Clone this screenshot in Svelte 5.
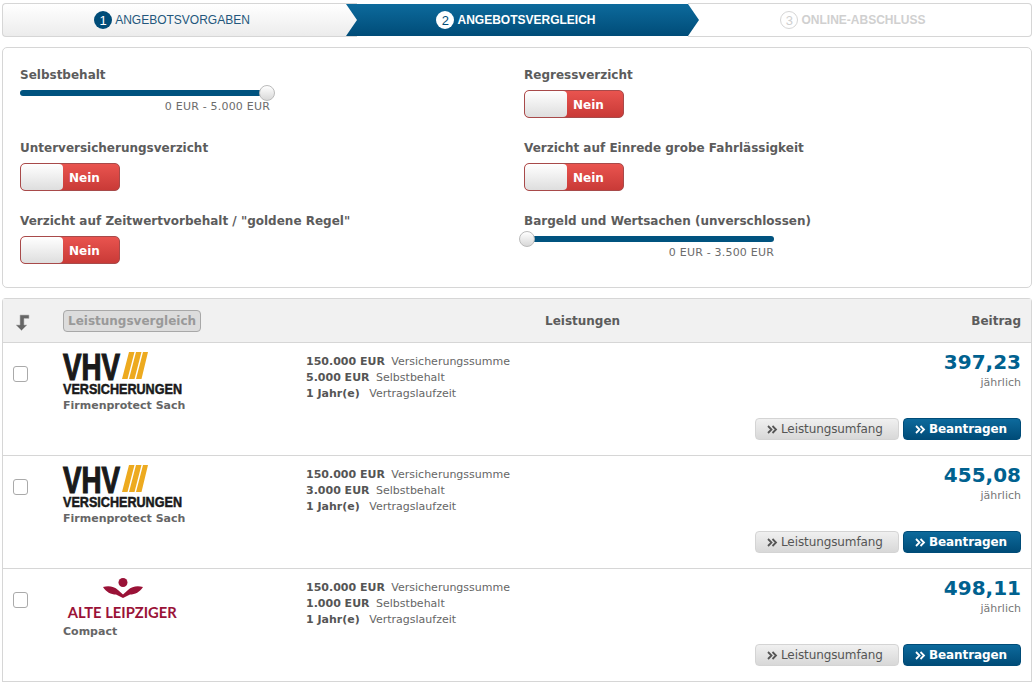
<script>
	const steps = [
		{ nr: 1, label: 'Angebotsvorgaben', state: 'done' },
		{ nr: 2, label: 'Angebotsvergleich', state: 'active' },
		{ nr: 3, label: 'Online-Abschluss', state: 'todo' }
	];

	const offers = [
		{ logo: 'vhv', tarif: 'Firmenprotect Sach', selbstbehalt: '5.000 EUR', preis: '397,23' },
		{ logo: 'vhv', tarif: 'Firmenprotect Sach', selbstbehalt: '3.000 EUR', preis: '455,08' },
		{ logo: 'alte', tarif: 'Compact', selbstbehalt: '1.000 EUR', preis: '498,11' }
	];
</script>

{#snippet toggle()}
	<div class="toggle">
		<span class="knob"></span>
		<span class="toggle-text">Nein</span>
	</div>
{/snippet}

{#snippet chevrons()}
	<svg class="chev" width="11" height="9" viewBox="0 0 11 9" fill="none" stroke="currentColor" stroke-width="1.8">
		<path d="M1 1l3.500 3.500L1 8M5.500 1L9 4.500 5.500 8" />
	</svg>
{/snippet}

<div class="page">
	<div class="stepper">
		{#each steps as step}
			<div class="step {step.state}">
				<span class="nr">{step.nr}</span>
				<span class="step-label">{step.label}</span>
			</div>
		{/each}
	</div>

	<section class="filters">
		<div class="filter">
			<div class="filter-label">Selbstbehalt</div>
			<div class="slider">
				<div class="track"></div>
				<span class="thumb at-end"></span>
			</div>
			<div class="range">0 EUR - 5.000 EUR</div>
		</div>
		<div class="filter">
			<div class="filter-label">Regressverzicht</div>
			{@render toggle()}
		</div>
		<div class="filter">
			<div class="filter-label">Unterversicherungsverzicht</div>
			{@render toggle()}
		</div>
		<div class="filter">
			<div class="filter-label">Verzicht auf Einrede grobe Fahrlässigkeit</div>
			{@render toggle()}
		</div>
		<div class="filter">
			<div class="filter-label">Verzicht auf Zeitwertvorbehalt / "goldene Regel"</div>
			{@render toggle()}
		</div>
		<div class="filter">
			<div class="filter-label">Bargeld und Wertsachen (unverschlossen)</div>
			<div class="slider">
				<div class="track"></div>
				<span class="thumb at-start"></span>
			</div>
			<div class="range">0 EUR - 3.500 EUR</div>
		</div>
	</section>

	<section class="table">
		<div class="table-head">
			<svg class="sort-arrow" width="15" height="17" viewBox="0 0 15 17">
				<path d="M14 1H5v10H1l5.500 5.500L12 11H9V4.500h5z" fill="#666" stroke="#bbb" stroke-width="0.6" />
			</svg>
			<span class="compare">Leistungsvergleich</span>
			<span class="head-mid">Leistungen</span>
			<span class="head-right">Beitrag</span>
		</div>

		{#each offers as offer}
			<div class="row">
				<span class="check"></span>
				<div class="insurer">
					{#if offer.logo === 'vhv'}
						<div class="logo vhv">
							<div class="vhv-top">
								<span class="vhv-name">VHV</span>
								<svg width="27" height="27" viewBox="0 0 27 27" fill="#edaa1f">
									<path d="M7 0h5.500L5.500 27H0zM14 0h5.500L12.500 27H7zM21 0h5L19.500 27H14z" />
								</svg>
							</div>
							<div class="vhv-sub">VERSICHERUNGEN</div>
						</div>
					{:else}
						<div class="logo alte">
							<svg class="alte-mark" width="40" height="20" viewBox="0 0 40 20" fill="#9a1237">
								<circle cx="20" cy="4.500" r="4.500" />
								<path d="M0 9c6-1.500 11-.5 15 3l5 4.500 5-4.500c4-3.500 9-4.500 15-3-3 5-8 7.500-13 7.500l-7 3.500-7-3.500C8 16.500 3 14 0 9z" />
							</svg>
							<div class="alte-name">ALTE LEIPZIGER</div>
						</div>
					{/if}
					<div class="tarif">{offer.tarif}</div>
				</div>
				<div class="facts">
					<div><b>150.000 EUR</b> Versicherungssumme</div>
					<div><b>{offer.selbstbehalt}</b> Selbstbehalt</div>
					<div class="years"><b>1 Jahr(e)</b> Vertragslaufzeit</div>
				</div>
				<div class="side">
					<div class="price">{offer.preis}</div>
					<div class="period">jährlich</div>
					<div class="actions">
						<button class="btn secondary">{@render chevrons()}Leistungsumfang</button>
						<button class="btn primary">{@render chevrons()}Beantragen</button>
					</div>
				</div>
			</div>
		{/each}
	</section>
</div>

<style>
	:global(body) {
		margin: 0;
		background: #fff;
		font-family: "DejaVu Sans", Verdana, sans-serif;
		color: #555;
	}

	.page {
		padding: 3px 0 0 2px;
		width: 1030px;
		height: 680px;
		overflow: hidden;
	}

	.stepper {
		display: grid;
		grid-template-columns: 344px 353px 1fr;
		height: 34px;
		font-family: "Liberation Sans", Arial, sans-serif;
		font-size: 12px;
		text-transform: uppercase;
	}

	.step {
		position: relative;
		display: flex;
		align-items: center;
		justify-content: center;
		gap: 3px;
		box-sizing: border-box;
	}

	.step.done {
		background: linear-gradient(#fff, #ececec);
		border: 1px solid #d6d6d6;
		border-right: 0;
		border-radius: 4px 0 0 4px;
		color: #23577c;
		margin-right: -11px;
		padding-right: 16px;
	}

	.step.active {
		z-index: 1;
		margin: 1px 0;
		padding-right: 13px;
		background: linear-gradient(#0d6a9c, #004c78);
		color: #fff;
		font-weight: bold;
		clip-path: polygon(0 0, 342px 0, 353px 50%, 342px 100%, 0 100%, 11px 50%);
	}

	.step.todo {
		border: 1px solid #d6d6d6;
		border-left: 0;
		border-radius: 0 4px 4px 0;
		color: #d0d0d0;
		font-weight: bold;
		margin-left: -11px;
		padding-right: 13px;
	}

	.nr {
		width: 18px;
		height: 18px;
		border-radius: 50%;
		display: inline-flex;
		align-items: center;
		justify-content: center;
		font-size: 13px;
		font-weight: normal;
	}

	.done .nr {
		background: #004c78;
		color: #fff;
	}

	.active .nr {
		background: #fff;
		color: #004c78;
	}

	.todo .nr {
		border: 1px solid #d6d6d6;
		box-sizing: border-box;
		color: #d0d0d0;
	}

	.filters {
		margin-top: 10px;
		height: 241px;
		box-sizing: border-box;
		border: 1px solid #d6d6d6;
		border-radius: 5px;
		padding: 19px 17px 0;
		display: grid;
		grid-template-columns: 504px 1fr;
		grid-auto-rows: 73px;
	}

	.filter-label {
		font-size: 12px;
		font-weight: bold;
		color: #5c5c5c;
		line-height: 16px;
		margin-bottom: 7px;
	}

	.toggle {
		width: 100px;
		height: 28px;
		box-sizing: border-box;
		border: 1px solid #a84a4a;
		border-radius: 5px;
		background: linear-gradient(#e9544f, #c93a37);
		display: flex;
		align-items: center;
		overflow: hidden;
	}

	.knob {
		width: 42px;
		height: 100%;
		background: linear-gradient(#fff, #dedede);
		border-radius: 4px;
	}

	.toggle-text {
		margin: 1px 0 0 6px;
		color: #fff;
		font-size: 12px;
		font-weight: bold;
	}

	.slider {
		position: relative;
		width: 250px;
		height: 6px;
		margin-top: 1px;
	}

	.track {
		height: 6px;
		background: #00537f;
		border-radius: 3px;
	}

	.thumb {
		position: absolute;
		top: -5px;
		width: 16px;
		height: 16px;
		box-sizing: border-box;
		border-radius: 50%;
		border: 1px solid #bbb;
		background: linear-gradient(#fff, #d8d8d8);
	}

	.at-end {
		right: -5px;
	}

	.at-start {
		left: -5px;
	}

	.range {
		width: 250px;
		text-align: right;
		font-size: 11px;
		letter-spacing: 0.2px;
		line-height: 14px;
		margin-top: 4px;
		color: #6c6c6c;
	}

	.table {
		margin-top: 10px;
		border-left: 1px solid #d6d6d6;
		border-right: 1px solid #d6d6d6;
		border-top: 1px solid #d6d6d6;
		border-radius: 4px 4px 0 0;
	}

	.table-head {
		height: 43px;
		background: #f1f1f1;
		border-bottom: 1px solid #d6d6d6;
		display: flex;
		align-items: center;
		position: relative;
		font-size: 12px;
		font-weight: bold;
		color: #5c5c5c;
	}

	.sort-arrow {
		margin: 4px 0 0 12px;
	}

	.compare {
		margin-left: 33px;
		padding: 1px 4px;
		height: 18px;
		line-height: 18px;
		border: 1px solid #a8a8a8;
		border-radius: 4px;
		background: #dcdcdc;
		color: #999;
	}

	.head-mid {
		position: absolute;
		left: 542px;
	}

	.head-right {
		margin-left: auto;
		margin-right: 10px;
	}

	.row {
		height: 113px;
		box-sizing: border-box;
		border-bottom: 1px solid #d6d6d6;
		display: flex;
		align-items: flex-start;
		padding: 9px 10px 0 10px;
	}

	.check {
		width: 15px;
		height: 16px;
		box-sizing: border-box;
		margin-top: 14px;
		border: 1px solid #aaa;
		border-radius: 3px;
		background: #fff;
	}

	.insurer {
		margin-left: 35px;
		width: 243px;
		flex: none;
	}

	.logo {
		height: 46px;
	}

	.vhv-top {
		display: flex;
		align-items: flex-start;
		height: 28px;
	}

	.vhv-name {
		font-family: "Liberation Sans", Arial, sans-serif;
		font-weight: bold;
		font-size: 36px;
		line-height: 27px;
		margin-top: 2px;
		color: #1a1a1a;
		-webkit-text-stroke: 1.2px #1a1a1a;
		transform: scaleX(0.77);
		transform-origin: left;
		display: inline-block;
		width: 59px;
	}

	.vhv-sub {
		font-family: "Liberation Sans", Arial, sans-serif;
		font-weight: bold;
		font-size: 15px;
		line-height: 15px;
		margin-top: 1px;
		color: #1a1a1a;
		-webkit-text-stroke: 0.5px #1a1a1a;
		transform: scaleX(0.84);
		transform-origin: left;
		white-space: nowrap;
	}

	.alte {
		display: flex;
		flex-direction: column;
		align-items: center;
		width: 119px;
	}

	.alte-name {
		font-family: Lato, "Liberation Sans", sans-serif;
		font-weight: bold;
		font-size: 16px;
		line-height: 18px;
		margin-top: 5px;
		color: #9a1237;
		white-space: nowrap;
		transform: scaleX(0.92);
	}

	.tarif {
		font-size: 11px;
		font-weight: bold;
		color: #666;
		line-height: 14px;
		margin-top: 1px;
	}

	.facts {
		font-size: 11px;
		line-height: 16px;
		color: #666;
		margin-top: 2px;
	}

	.facts b {
		color: #555;
		margin-right: 3px;
	}

	.years b {
		margin-right: 6px;
	}

	.side {
		margin-left: auto;
		text-align: right;
		display: flex;
		flex-direction: column;
		align-items: flex-end;
	}

	.price {
		font-size: 20px;
		line-height: 20px;
		font-weight: bold;
		color: #00618f;
	}

	.period {
		font-size: 11px;
		line-height: 14px;
		margin-top: 4px;
		color: #777;
	}

	.actions {
		display: flex;
		gap: 4px;
		margin-top: 28px;
	}

	.btn {
		height: 22px;
		box-sizing: border-box;
		display: inline-flex;
		align-items: center;
		gap: 3px;
		border-radius: 4px;
		font-family: inherit;
		font-size: 12px;
		letter-spacing: -0.1px;
		padding: 0 0 0 11px;
	}

	.secondary {
		width: 144px;
		background: linear-gradient(#f0f0f0, #d8d8d8);
		border: 1px solid #d4d4d4;
		color: #555;
	}

	.primary {
		width: 118px;
		background: linear-gradient(#0d6a9c, #004c78);
		border: 1px solid #004c78;
		color: #fff;
		font-weight: bold;
	}
</style>
